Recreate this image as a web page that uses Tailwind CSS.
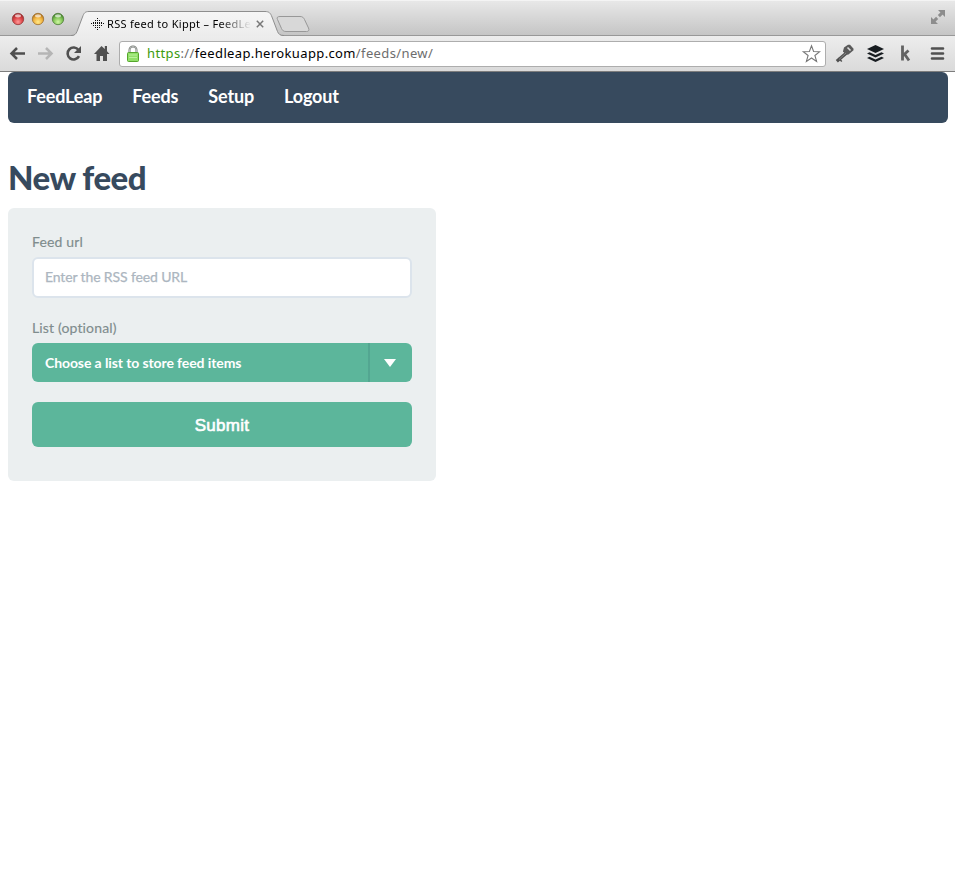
<!DOCTYPE html>
<html lang="en">
<head>
<meta charset="utf-8">
<title>RSS feed to Kippt – FeedLeap</title>
<script src="https://cdn.jsdelivr.net/npm/@tailwindcss/browser@4"></script>
</head>
<body class="h-[874px] w-[955px] overflow-hidden bg-white font-['Lato',sans-serif]">
<header class="h-[72px] border-b border-[#7d7d7d] bg-[#e4e4e4] font-['Noto_Sans',sans-serif]">
  <div class="relative h-9 bg-linear-to-b from-[#e9e9e9] to-[#c4c4c4]">
    <svg class="absolute inset-0" width="955" height="36" viewBox="0 0 955 36" fill="none">
      <defs>
        <linearGradient id="tab" x1="0" y1="0" x2="0" y2="1"><stop stop-color="#f6f6f6"/><stop offset="1" stop-color="#ececec"/></linearGradient>
        <radialGradient id="r" cx=".5" cy=".75" r=".65"><stop stop-color="#f99"/><stop offset=".6" stop-color="#dd4648"/><stop offset="1" stop-color="#a92c2e"/></radialGradient>
        <radialGradient id="y" cx=".5" cy=".75" r=".65"><stop stop-color="#ffe98a"/><stop offset=".6" stop-color="#f2b440"/><stop offset="1" stop-color="#b87a20"/></radialGradient>
        <radialGradient id="g" cx=".5" cy=".75" r=".65"><stop stop-color="#d0f7a4"/><stop offset=".6" stop-color="#83c657"/><stop offset="1" stop-color="#4b8a31"/></radialGradient>
      </defs>
      <path d="M0 .5H955" stroke="#f4f4f4"/>
      <path d="M0 35.5H955" stroke="#989898"/>
      <path d="M72 36C75 35.500 76 34 77 31.500L82.500 17C84 13 85 11.500 89 11.500H265C269 11.500 270.500 13 272 17L277.500 31.500C278.500 34 280 35.500 283 36Z" fill="url(#tab)"/>
      <path d="M71 35.500C74.500 35.500 76 34 77 31.500L82.500 17C84 13 85 11.500 89 11.500H265C269 11.500 270.500 13 272 17L277.500 31.500C278.500 34 280 35.500 284 35.500" stroke="#8e8e8e"/>
      <path d="M280 16.500H300C302.500 16.500 303.500 17.500 304.500 19.500L308.500 28C309.500 30.500 308.500 31.500 306.500 31.500H286C283.500 31.500 282.500 30.500 281.500 28.500L277.500 19.500C276.500 17.500 277.500 16.500 280 16.500Z" fill="#d8d8d8" stroke="#989898"/>
      <g stroke-width=".8">
        <circle cx="18" cy="19" r="5.700" fill="url(#r)" stroke="#96383a"/>
        <circle cx="38" cy="19" r="5.700" fill="url(#y)" stroke="#9e7030"/>
        <circle cx="58" cy="19" r="5.700" fill="url(#g)" stroke="#4f7d3b"/>
      </g>
      <g fill="#fff" fill-opacity=".65"><ellipse cx="18" cy="15.800" rx="3" ry="1.600"/><ellipse cx="38" cy="15.800" rx="3" ry="1.600"/><ellipse cx="58" cy="15.800" rx="3" ry="1.600"/></g>
      <g stroke="#111" stroke-dasharray="1 1"><path d="M97 18.500H98M95 20.500H100M93 22.500H102M91 23.500H104M93 25.500H102M95 27.500H100M97 29.500H98"/></g>
      <path d="M256.800 20.800L263.200 27.200M263.200 20.800L256.800 27.200" stroke="#777" stroke-width="1.500"/>
      <path d="M943.500 11.500L932.500 22.500" stroke="#8d8d8d" stroke-width="3" stroke-dasharray="6.500 2.500"/>
      <g fill="#8d8d8d"><path d="M938 10h7v7zM931 17v7h7z"/></g>
    </svg>
    <div class="relative ml-[107px] flex h-9 w-[143px] items-center pt-[12px] text-[11px] leading-4 tracking-[0.3px] whitespace-nowrap text-black"><span class="mask-r-from-78%">RSS feed to Kippt – FeedLe</span></div>
  </div>
  <div class="flex h-[35px] items-center bg-linear-to-b from-[#ededed] to-[#dadada]">
    <svg class="shrink-0" width="119" height="35" viewBox="0 36 119 35" fill="none">
      <path d="M25 53.500H12M17 48l-5.500 5.500L17 59" stroke="#4e4e4e" stroke-width="2.500"/>
      <path d="M38 53.500H51M46 48l5.500 5.500L46 59" stroke="#b5b5b5" stroke-width="2.500"/>
      <path d="M78.500 50A6 6 0 1 0 79 56.200" stroke="#505050" stroke-width="2.600"/>
      <path d="M81 46v7h-7z" fill="#505050"/>
      <path d="M101.500 46L94 54h2.500v7h3.500v-5h3v5h4v-7h2.500L107 51.200V46h-2.200v3z" fill="#505050"/>
    </svg>
    <div class="flex h-[26px] w-[707px] items-center rounded-[3px] border border-[#adadad] bg-white">
      <svg class="ml-[7px] shrink-0" width="12" height="18" viewBox="0 0 12 18" fill="none">
        <path d="M2.500 8V5a3.500 3.500 0 0 1 7 0v3" stroke="#737973" stroke-width="2"/><path d="M2.500 7V5a3.500 3.500 0 0 1 7 0v2" stroke="#ddd" stroke-width=".7"/>
        <rect x=".5" y="7.500" width="11" height="9" rx="1" fill="#91df68" stroke="#55a62c"/><path d="M2 10h8M2 12.500h8" stroke="#b9f19a"/>
      </svg>
      <span class="ml-[8px] flex-1 pb-[2px] text-[13px] leading-5 tracking-[0.37px] whitespace-nowrap text-[#6d6d6d]"><span class="text-[#3c9a0c]">https</span>://<span class="text-black">feedleap.herokuapp.com</span>/feeds/new/</span>
      <svg class="mr-[4px]" width="20" height="20" viewBox="0 0 20 20"><path d="M10.500 1.800l2.100 5.700 6.100.2-4.800 3.800 1.700 5.900-5.100-3.400-5.100 3.400 1.700-5.900L2.300 7.700l6.100-.2z" fill="#fff" stroke="#777" stroke-width="1.100"/></svg>
    </div>
    <svg class="shrink-0" width="129" height="35" viewBox="826 36 129 35" fill="none">
      <path d="M847 52.500l-10.200 8.800" stroke="#505050" stroke-width="3.200"/><path d="M838.500 58l3.300 3.500" stroke="#505050" stroke-width="1.500"/>
      <path d="M844 47.500l4-2.700h2l3.500 4v1.500l-5 4.200-3 .2-2.500-3.500z" fill="#5a5a5a"/><path d="M847.500 47.500l3 3" stroke="#ddd" stroke-width="1.600"/><path d="M846 53l-7 6.500" stroke="#909090" stroke-width=".8"/>
      <g fill="#171c20"><path d="M875.500 45l8.500 4-8.500 4-8.500-4z"/><path d="M867 53.500l2.500-1.200 6 2.800 6-2.800 2.500 1.200-8.500 4z"/><path d="M867 58l2.500-1.200 6 2.800 6-2.800 2.500 1.200-8.500 4z"/></g>
      <path d="M902.500 45.500V60.500M903 55.500l5.500-5M904.500 54l4.500 6.500" stroke="#626262" stroke-width="2.800"/>
      <path d="M932 48.500h11M932 53.500h11M932 58.500h11" stroke="#505050" stroke-width="2.600" stroke-linecap="round"/>
    </svg>
  </div>
</header>
<main class="pr-[7px] pl-2">
  <nav class="flex h-[51px] gap-[30px] rounded-md bg-[#374a5e] pt-[11px] pl-[19px] text-[18px] leading-[27px] font-bold tracking-[-0.15px] text-white">
    <a>FeedLeap</a><a>Feeds</a><a>Setup</a><a>Logout</a>
  </nav>
  <h1 class="mt-[34px] text-[33px] leading-[40px] font-black tracking-[-0.5px] text-[#374a5e]">New feed</h1>
  <form class="mt-[11px] h-[273px] w-[428px] rounded-md bg-[#ebeff0] px-6 pt-6 text-[14px]">
    <label class="block h-[25px] leading-5 tracking-[0.15px] text-[#7f8c8d] [-webkit-text-stroke:0.15px_#7f8c8d]">Feed url</label>
    <div class="flex h-[41px] items-center rounded-md border-2 border-[#dce4ec] bg-white pb-[2px] pl-[11px] tracking-[-0.13px] text-[#acb6c0] [-webkit-text-stroke:0.25px_#acb6c0]">Enter the RSS feed URL</div>
    <label class="mt-5 block h-[25px] leading-5 tracking-[0.15px] text-[#7f8c8d] [-webkit-text-stroke:0.15px_#7f8c8d]">List (optional)</label>
    <div class="flex h-[39px] items-center overflow-hidden rounded-md bg-[#5cb69b] font-bold tracking-[-0.1px] text-white">
      <span class="flex-1 pl-[13px]">Choose a list to store feed items</span>
      <span class="flex h-full w-[44px] items-center justify-center border-l-2 border-[#53a691] pr-[2px]"><svg width="12" height="8" viewBox="0 0 12 8"><path d="M0 0h12L6 8z" fill="#fff"/></svg></span>
    </div>
    <button type="button" class="mt-5 block h-[45px] w-full rounded-md bg-[#5cb69b] pt-[2px] font-['Liberation_Sans',sans-serif] text-[17px] tracking-[0.3px] text-white [-webkit-text-stroke:0.6px_white]">Submit</button>
  </form>
</main>
</body>
</html>
